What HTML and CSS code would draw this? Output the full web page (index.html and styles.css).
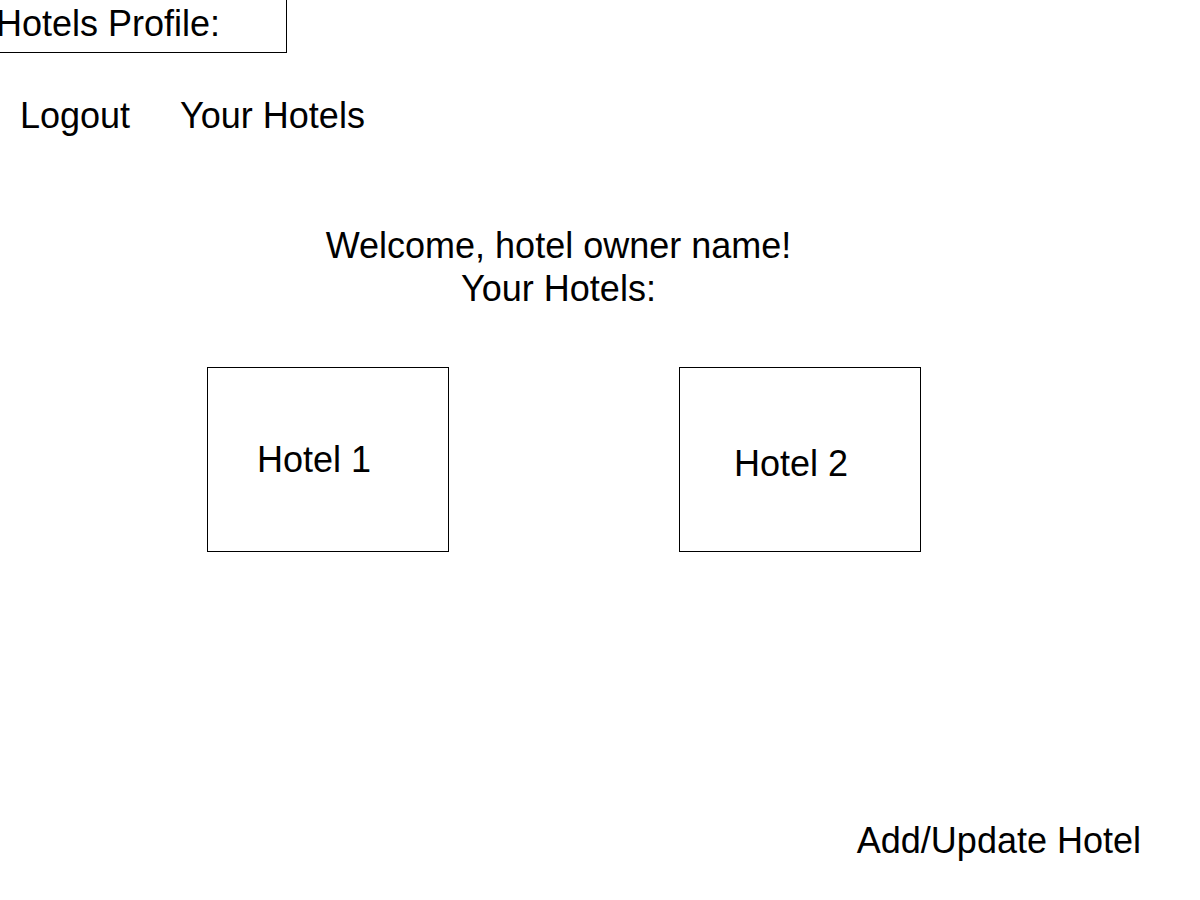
FILE: index.html
```html
<!DOCTYPE html>
<html lang="en">
<head>
<meta charset="utf-8">
<title>Hotels Profile</title>
<link rel="stylesheet" href="styles.css">
</head>
<body>
<div class="page">
  <header class="title-box">
    <span class="title-text">Hotels Profile:</span>
  </header>
  <nav class="nav">
    <a class="nav-link" href="#">Logout</a>
    <a class="nav-link" href="#">Your Hotels</a>
  </nav>
  <section class="welcome">
    <div>Welcome, hotel owner name!</div>
    <div>Your Hotels:</div>
  </section>
  <section class="hotels">
    <div class="hotel-card hotel-card--one">Hotel 1</div>
    <div class="hotel-card hotel-card--two">Hotel 2</div>
  </section>
  <footer class="footer">
    <a class="footer-link" href="#">Add/Update Hotel</a>
  </footer>
</div>
</body>
</html>
```
FILE: styles.css
```css
html, body {
  margin: 0;
  padding: 0;
  background: #ffffff;
}

body {
  font-family: "Liberation Sans", Arial, sans-serif;
  font-size: 36px;
  line-height: 41px;
  color: #000000;
}

.page {
  width: 1200px;
  min-height: 900px;
  display: flex;
  flex-direction: column;
  overflow: hidden;
}

a {
  color: #000000;
  text-decoration: none;
}

.title-box {
  align-self: flex-start;
  width: 287px;
  height: 53px;
  box-sizing: border-box;
  border-right: 1px solid #000000;
  border-bottom: 1px solid #000000;
  padding-top: 3px;
}

.title-text {
  display: block;
  margin-left: -4px;
  white-space: nowrap;
}

.nav {
  display: flex;
  gap: 50px;
  margin-top: 42px;
  padding-left: 20px;
}

.welcome {
  margin-top: 88px;
  width: 1117px;
  text-align: center;
  line-height: 43px;
}

.hotels {
  display: flex;
  gap: 230px;
  margin-top: 57px;
  padding-left: 207px;
}

.hotel-card {
  width: 242px;
  height: 185px;
  box-sizing: border-box;
  border: 1px solid #000000;
  white-space: nowrap;
}

.hotel-card--one {
  padding: 71px 0 0 49px;
}

.hotel-card--two {
  padding: 75px 0 0 54px;
}

.footer {
  display: flex;
  justify-content: flex-end;
  margin-top: 268px;
  padding-right: 59px;
}
```
